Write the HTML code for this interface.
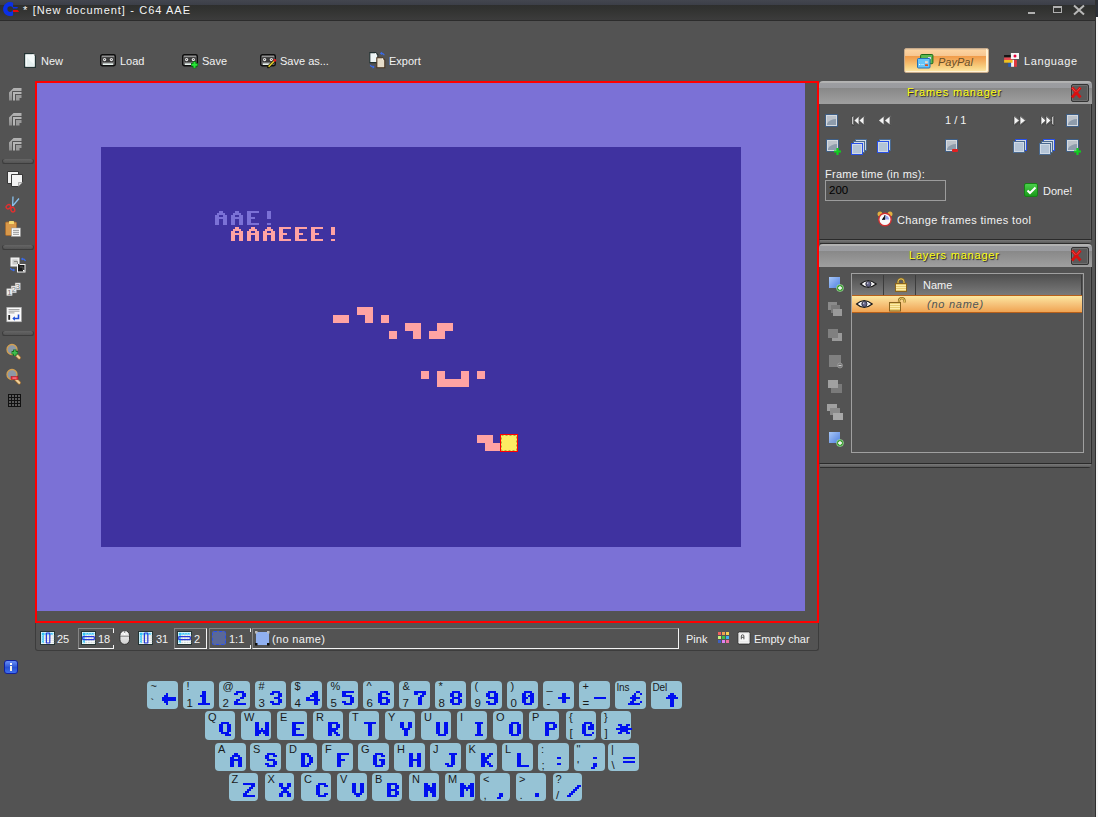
<!DOCTYPE html>
<html><head><meta charset="utf-8"><style>
*{margin:0;padding:0;box-sizing:border-box}
html,body{width:1098px;height:817px;overflow:hidden;background:#535353;font-family:"Liberation Sans",sans-serif;font-size:11px;color:#f2f2f2}
.a{position:absolute}
.t{position:absolute;white-space:nowrap;line-height:13px}
svg{position:absolute;overflow:visible}
.sep{position:absolute;left:2px;width:32px;height:4px;border-radius:2px;background:linear-gradient(#656565,#545454);box-shadow:inset 1px 0 0 #3a3a3a,inset -1px 0 0 #3a3a3a,0 1px 0 #3c3c3c}
.hdr{position:absolute;height:23px;border-radius:4px 4px 0 0;background:linear-gradient(#b4b4b4 0,#b0b0b0 2px,#9c9da1 2px,#9a9b9f 7px,#888 7px,#9e9e9e 22px,#9e9e9e 23px);}
.htxt{position:absolute;color:#ffff10;letter-spacing:0.8px;text-shadow:1px 1px 1px #1a1a1a;white-space:nowrap;line-height:13px}
.cls{position:absolute;width:18px;height:18px;border:1px solid #333;border-radius:2px;background:#5a5a5a;box-shadow:inset 0 0 0 1px #6e6e6e}
.key{position:absolute;background:#96c3d5;border-radius:4px;}
.kl{position:absolute;color:#1a1a1a;font-size:11px;line-height:11px;white-space:nowrap}
</style></head><body>

<div class="a" style="left:0;top:0;width:1095px;height:21px;background:linear-gradient(#43464f 0,#3c3f48 5px,#2e2f2e 5px,#323331 10px,#3c3c3c 20px,#2c2c2c 20px,#2c2c2c 21px)"></div>
<div class="a" style="left:1092px;top:21px;width:3px;height:796px;background:#565656"></div>
<div class="a" style="left:1095px;top:0;width:1px;height:817px;background:#303030"></div>
<div class="a" style="left:1096px;top:17px;width:2px;height:800px;background:#f6f6f6"></div>
<div class="a" style="left:1096px;top:0;width:2px;height:17px;background:#2c3038"></div>
<svg style="left:0;top:0" width="24" height="20"><path fill-rule="evenodd" d="M13.1 2.8 A7 7 0 1 0 13.1 15.4 Z M10.2 6.3 A2.8 2.8 0 1 0 10.2 11.9 A2.8 2.8 0 1 0 10.2 6.3 Z" fill="#0a30e8"/><path d="M13 7h5l-0.8 1.6h-4.2z" fill="#0a30e8"/><path d="M13 10h4.8l1.3 2h-6.1z" fill="#e80808"/></svg>
<div class="t" style="left:23px;top:4px;color:#f4f4f4;letter-spacing:0.95px;word-spacing:0.4px">* [New document] - C64 AAE</div>
<div class="a" style="left:1028px;top:12px;width:7px;height:2px;background:#b0b0b0"></div>
<div class="a" style="left:1053px;top:6px;width:9px;height:7px;border:1px solid #b0b0b0;border-top-width:2px"></div>
<svg style="left:1073px;top:5px" width="12" height="10"><path d="M1 0.5 L11 9.5 M11 0.5 L1 9.5" stroke="#b8b8b8" stroke-width="2"/></svg>
<svg style="left:24px;top:53px" width="13" height="16"><path d="M0.6 0.6h8.4l2.4 2.4v11.4h-10.8z" fill="#dfe9e9" stroke="#243434" stroke-width="1.2"/><path d="M1.6 1.6h7l1.8 1.8v10h-8.8z" fill="#f4fafa"/><path d="M3 4q3 5 7 7v2h-7z" fill="#e0ecec" opacity="0.8"/><rect x="8.5" y="1.2" width="2" height="2" fill="#fff"/></svg>
<div class="t" style="left:41px;top:55px">New</div>
<svg style="left:100px;top:54px" width="18" height="15"><rect x="0.7" y="0.7" width="14.6" height="11" rx="1.6" fill="#6e6e6e" stroke="#0e0e0e" stroke-width="1.4"/><rect x="2" y="1.8" width="12" height="1" fill="#9a9a9a"/><rect x="2.2" y="3.3" width="11.6" height="4.6" rx="0.8" fill="#3a3a3a"/><circle cx="4.6" cy="5.6" r="1.6" fill="#e8e8e8"/><circle cx="4.6" cy="5.6" r="0.5" fill="#222"/><circle cx="11.4" cy="5.6" r="1.6" fill="#e8e8e8"/><circle cx="11.4" cy="5.6" r="0.5" fill="#222"/><rect x="3" y="9.4" width="10" height="1.6" fill="#e8f4f0"/></svg>
<div class="t" style="left:120px;top:55px">Load</div>
<svg style="left:182px;top:54px" width="18" height="15"><rect x="0.7" y="0.7" width="14.6" height="11" rx="1.6" fill="#6e6e6e" stroke="#0e0e0e" stroke-width="1.4"/><rect x="2" y="1.8" width="12" height="1" fill="#9a9a9a"/><rect x="2.2" y="3.3" width="11.6" height="4.6" rx="0.8" fill="#3a3a3a"/><circle cx="4.6" cy="5.6" r="1.6" fill="#e8e8e8"/><circle cx="4.6" cy="5.6" r="0.5" fill="#222"/><circle cx="11.4" cy="5.6" r="1.6" fill="#e8e8e8"/><circle cx="11.4" cy="5.6" r="0.5" fill="#222"/><rect x="3" y="9.4" width="10" height="1.6" fill="#e8f4f0"/><path d="M12.5 7.3v7M9 10.8h7" stroke="#0a6a10" stroke-width="3.6"/><path d="M12.5 7.9v5.8M9.6 10.8h5.8" stroke="#28e838" stroke-width="2"/></svg>
<div class="t" style="left:202px;top:55px">Save</div>
<svg style="left:260px;top:54px" width="18" height="15"><rect x="0.7" y="0.7" width="14.6" height="11" rx="1.6" fill="#6e6e6e" stroke="#0e0e0e" stroke-width="1.4"/><rect x="2" y="1.8" width="12" height="1" fill="#9a9a9a"/><rect x="2.2" y="3.3" width="11.6" height="4.6" rx="0.8" fill="#3a3a3a"/><circle cx="4.6" cy="5.6" r="1.6" fill="#e8e8e8"/><circle cx="4.6" cy="5.6" r="0.5" fill="#222"/><circle cx="11.4" cy="5.6" r="1.6" fill="#e8e8e8"/><circle cx="11.4" cy="5.6" r="0.5" fill="#222"/><rect x="3" y="9.4" width="10" height="1.6" fill="#e8f4f0"/><path d="M8 13.3L14.2 7" stroke="#1a1a00" stroke-width="3"/><path d="M8.3 13L14 7.3" stroke="#e8d030" stroke-width="1.6"/><circle cx="14.8" cy="6.4" r="1.4" fill="#e82020"/><rect x="7.2" y="12.6" width="1.6" height="1.6" fill="#111"/></svg>
<div class="t" style="left:280px;top:55px">Save as...</div>
<svg style="left:368px;top:51px" width="19" height="19"><path d="M1.8 1.6h5.8l2.2 2.2v7.8h-8z" fill="#eef4f4" stroke="#223030" stroke-width="1.1"/><path d="M8.8 6.8h5.8l2.2 2.2v7.8h-8z" fill="#e6dcc8" stroke="#4a3420" stroke-width="1.1"/><rect x="7" y="2.2" width="1.2" height="1.2" fill="#fff"/><rect x="14" y="7.4" width="1.2" height="1.2" fill="#fff"/><path d="M16.3 4.2Q15.5 2 12.5 2.3" stroke="#3a6ae8" stroke-width="1.2" fill="none"/><path d="M12 2.4l2.2-1.8v3.6z" fill="#3a6ae8"/><path d="M2.3 14Q3 16.2 6 16" stroke="#3a6ae8" stroke-width="1.2" fill="none"/><path d="M6.8 16l-2.2 1.8v-3.6z" fill="#3a6ae8"/></svg>
<div class="t" style="left:389px;top:55px">Export</div>
<div class="a" style="left:904px;top:48px;width:85px;height:25px;border:1px solid #c8aa8a;border-radius:2px;box-shadow:inset -2px -1px 0 #fff2d4;background:linear-gradient(#e8c8a0 0,#e8c8a0 1px,#fdd4a0 1px,#f7c690 7px,#f09a48 7px,#f4b060 12px,#f8d080 18px,#fde8a8 23px)"></div>
<svg style="left:912px;top:48px" width="26" height="24"><rect x="8.6" y="6.5" width="12.3" height="9.2" rx="1" fill="#5cb850" stroke="#1e6a1a" stroke-width="1"/><rect x="16" y="9" width="3" height="2.2" fill="#d8d0f0"/><rect x="5.5" y="10.5" width="12.5" height="9.5" rx="1" fill="#66c4f8" stroke="#2270b8" stroke-width="1"/><rect x="7" y="16" width="1.2" height="1" fill="#fff"/><rect x="9" y="16.2" width="3" height="0.6" fill="#cfefff"/><rect x="13" y="13.2" width="2.8" height="2" fill="#f0d8c8"/><rect x="13" y="16.3" width="3" height="1.8" rx="0.6" fill="#e84810"/></svg>
<div class="t" style="left:938px;top:56px;color:#6a5028;font-style:italic">PayPal</div>
<svg style="left:1000px;top:48px" width="24" height="22"><rect x="8.2" y="11.8" width="2.9" height="7" fill="#2a5ab0"/><rect x="11.1" y="11.8" width="2.9" height="7" fill="#f4f4f4"/><rect x="14" y="11.8" width="2.9" height="7" fill="#e03a40"/><rect x="4.1" y="7" width="8.5" height="2.5" fill="#151515"/><rect x="4.1" y="9.5" width="8.5" height="2.5" fill="#e84a50"/><rect x="4.1" y="12" width="8.5" height="2.7" fill="#f0c020"/><rect x="10.9" y="5" width="8.1" height="6" fill="#f6f6f6"/><circle cx="15" cy="8" r="1.5" fill="#e8003a"/></svg>
<div class="t" style="left:1024px;top:55px;letter-spacing:0.6px">Language</div>
<svg style="left:0px;top:85px" width="24" height="16" viewBox="0 85 24 16"><defs><linearGradient id="cg88" x1="0" y1="88" x2="0" y2="100.5" gradientUnits="userSpaceOnUse"><stop offset="0" stop-color="#b4b4b4"/><stop offset="1" stop-color="#8c8c8c"/></linearGradient></defs><path d="M9 100.5V92.6L13.6 88H21.5V91H12.6L12 91.6V100.5Z" fill="url(#cg88)"/><path d="M13 100.5V92H21.5V94H15V100.5Z" fill="#b6b6b6"/><path d="M16 100.5V95H21.5V98H19.5V100.5Z" fill="#9a9a9a"/></svg>
<svg style="left:0px;top:110px" width="24" height="16" viewBox="0 85 24 16"><defs><linearGradient id="cg113" x1="0" y1="88" x2="0" y2="100.5" gradientUnits="userSpaceOnUse"><stop offset="0" stop-color="#b4b4b4"/><stop offset="1" stop-color="#8c8c8c"/></linearGradient></defs><path d="M9 100.5V92.6L13.6 88H21.5V91H12.6L12 91.6V100.5Z" fill="url(#cg113)"/><path d="M13 100.5V92H21.5V94H15V100.5Z" fill="#b6b6b6"/><path d="M16 100.5V95H21.5V98H19.5V100.5Z" fill="#9a9a9a"/></svg>
<svg style="left:0px;top:135px" width="24" height="16" viewBox="0 85 24 16"><defs><linearGradient id="cg138" x1="0" y1="88" x2="0" y2="100.5" gradientUnits="userSpaceOnUse"><stop offset="0" stop-color="#b4b4b4"/><stop offset="1" stop-color="#8c8c8c"/></linearGradient></defs><path d="M9 100.5V92.6L13.6 88H21.5V91H12.6L12 91.6V100.5Z" fill="url(#cg138)"/><path d="M13 100.5V92H21.5V94H15V100.5Z" fill="#b6b6b6"/><path d="M16 100.5V95H21.5V98H19.5V100.5Z" fill="#9a9a9a"/></svg>
<div class="sep" style="top:159px"></div>
<svg style="left:0;top:160px" width="30" height="85" viewBox="0 160 30 85"><path d="M7.5 171.5h11v12h-11z" fill="#f0f0f0" stroke="#2a2a2a" stroke-width="0.9"/><path d="M11.5 174.5h11v8l-4 4h-7z" fill="#f4f4f4" stroke="#2a2a2a" stroke-width="0.9"/><path d="M22.5 182.5h-4v4" fill="#ddd" stroke="#888" stroke-width="0.6"/><path d="M13 196.5L12.6 206M19 198.5L12.6 206" stroke="#88c0ec" stroke-width="1.3"/><ellipse cx="8.4" cy="206.8" rx="2.4" ry="1.9" transform="rotate(-35 8.4 206.8)" fill="none" stroke="#e03030" stroke-width="1.4"/><ellipse cx="12.8" cy="209.6" rx="1.9" ry="2.4" transform="rotate(-20 12.8 209.6)" fill="none" stroke="#e03030" stroke-width="1.4"/><rect x="5.5" y="222" width="11" height="13.5" rx="1.2" fill="#d8984a" stroke="#a8682a" stroke-width="0.8"/><rect x="9" y="221" width="5" height="3" rx="0.6" fill="#f4d870"/><rect x="11.5" y="228" width="9" height="8.5" fill="#fafafa" stroke="#999" stroke-width="0.6"/><path d="M13 230.3h6M13 232.3h6M13 234.3h6" stroke="#888" stroke-width="0.9"/></svg>
<div class="sep" style="top:245px"></div>
<svg style="left:0;top:250px" width="30" height="80" viewBox="0 250 30 80"><rect x="11" y="258" width="8" height="8" fill="#e8e8e8" stroke="#f4f4f4" stroke-width="1"/><rect x="12.5" y="259.5" width="5" height="5" fill="#c8c8c8"/><path d="M14 261.5h3.5v3.5" stroke="#888" stroke-width="1" fill="none"/><rect x="17.5" y="264.5" width="7.5" height="7.5" fill="#1a1a1a" stroke="#f4f4f4" stroke-width="1"/><path d="M20 267h3v3" stroke="#555" stroke-width="1" fill="none"/><rect x="23" y="270" width="1.5" height="1.5" fill="#fff"/><rect x="18" y="264" width="1.5" height="1.5" fill="#333"/><path d="M25.5 261Q24.5 258.5 21.5 259" stroke="#3a6ae8" stroke-width="1.2" fill="none"/><path d="M21 259l2-1.6v3.2z" fill="#3a6ae8"/><path d="M10.5 268Q11 270.5 14.5 270" stroke="#3a6ae8" stroke-width="1.2" fill="none"/><path d="M15 270l-2 1.6v-3.2z" fill="#3a6ae8"/><rect x="15.2" y="283" width="5" height="6.8" fill="#f0f0f0" stroke="#bbb" stroke-width="0.5"/><text x="15.6" y="289.3" font-size="8" fill="#777" font-family="Liberation Sans">3</text><rect x="11.2" y="286" width="5" height="6.8" fill="#f0f0f0" stroke="#bbb" stroke-width="0.5"/><text x="11.6" y="292.3" font-size="8" fill="#777" font-family="Liberation Sans">2</text><rect x="6.8" y="288.8" width="5.3" height="6.8" fill="#f0f0f0" stroke="#bbb" stroke-width="0.5"/><text x="7.3" y="295.1" font-size="8" fill="#777" font-family="Liberation Sans">1</text><rect x="6.8" y="307.3" width="14.6" height="14.5" fill="#fafafa" stroke="#aaa" stroke-width="0.6"/><path d="M8.5 309.5h11M8.5 311.2h11M8.5 312.9h6" stroke="#999" stroke-width="0.9"/><rect x="8.3" y="315" width="1.8" height="4.8" fill="#222"/><path d="M18.5 314.5v4h-5" stroke="#2050d8" stroke-width="1.6" fill="none"/><path d="M12.3 318.5l2.6-2.2v4.4z" fill="#2050d8"/></svg>
<div class="sep" style="top:331px"></div>
<svg style="left:0;top:340px" width="26" height="22" viewBox="0 340 26 22"><path d="M15.8 354.2L19.2 357.8" stroke="#9a6a30" stroke-width="3.6" stroke-linecap="round"/><path d="M15.8 354.2L19.2 357.8" stroke="#f0d098" stroke-width="2.2" stroke-linecap="round"/><circle cx="12" cy="349.5" r="5" fill="#8c98a6" stroke="#d4a050" stroke-width="1.3"/><path d="M14.8 349.6v6.4M11.6 352.8h6.4" stroke="#1a6a20" stroke-width="3.4"/><path d="M14.8 350.2v5.2M12.2 352.8h5.2" stroke="#40c050" stroke-width="1.8"/></svg>
<svg style="left:0;top:365px" width="26" height="22" viewBox="0 340 26 22"><path d="M15.8 354.2L19.2 357.8" stroke="#9a6a30" stroke-width="3.6" stroke-linecap="round"/><path d="M15.8 354.2L19.2 357.8" stroke="#f0d098" stroke-width="2.2" stroke-linecap="round"/><circle cx="12" cy="349.5" r="5" fill="#8c98a6" stroke="#d4a050" stroke-width="1.3"/><rect x="11" y="351.5" width="7" height="3" fill="#e82838" stroke="#a01820" stroke-width="0.5"/><rect x="12.5" y="352.6" width="4" height="0.9" fill="#ffb0b0"/></svg>
<svg style="left:8px;top:394px" width="13" height="13"><rect x="0" y="0" width="13" height="13" fill="#111"/><rect x="1" y="1" width="2" height="2" fill="#5a5a5a"/><rect x="1" y="4" width="2" height="2" fill="#5a5a5a"/><rect x="1" y="7" width="2" height="2" fill="#5a5a5a"/><rect x="1" y="10" width="2" height="2" fill="#5a5a5a"/><rect x="4" y="1" width="2" height="2" fill="#5a5a5a"/><rect x="4" y="4" width="2" height="2" fill="#5a5a5a"/><rect x="4" y="7" width="2" height="2" fill="#5a5a5a"/><rect x="4" y="10" width="2" height="2" fill="#5a5a5a"/><rect x="7" y="1" width="2" height="2" fill="#5a5a5a"/><rect x="7" y="4" width="2" height="2" fill="#5a5a5a"/><rect x="7" y="7" width="2" height="2" fill="#5a5a5a"/><rect x="7" y="10" width="2" height="2" fill="#5a5a5a"/><rect x="10" y="1" width="2" height="2" fill="#5a5a5a"/><rect x="10" y="4" width="2" height="2" fill="#5a5a5a"/><rect x="10" y="7" width="2" height="2" fill="#5a5a5a"/><rect x="10" y="10" width="2" height="2" fill="#5a5a5a"/></svg>
<div class="a" style="left:35px;top:81px;width:784px;height:542px;border:2px solid #ff0000;background:#535353"></div>
<div class="a" style="left:37px;top:83px;width:768px;height:528px;background:#7b71d6"></div>
<div class="a" style="left:101px;top:147px;width:640px;height:400px;background:#3f32a0"></div>
<svg style="left:0;top:0" width="1098" height="817"><path d="M219 211h4v2h-4zM217 213h8v2h-8zM215 215h4v2h-4zM223 215h4v2h-4zM215 217h12v2h-12zM215 219h4v2h-4zM223 219h4v2h-4zM215 221h4v2h-4zM223 221h4v2h-4zM215 223h4v2h-4zM223 223h4v2h-4zM235 211h4v2h-4zM233 213h8v2h-8zM231 215h4v2h-4zM239 215h4v2h-4zM231 217h12v2h-12zM231 219h4v2h-4zM239 219h4v2h-4zM231 221h4v2h-4zM239 221h4v2h-4zM231 223h4v2h-4zM239 223h4v2h-4zM247 211h12v2h-12zM247 213h4v2h-4zM247 215h4v2h-4zM247 217h8v2h-8zM247 219h4v2h-4zM247 221h4v2h-4zM247 223h12v2h-12zM267 211h4v2h-4zM267 213h4v2h-4zM267 215h4v2h-4zM267 217h4v2h-4zM267 223h4v2h-4z" fill="#7b71d6"/><path d="M235 227h4v2h-4zM233 229h8v2h-8zM231 231h4v2h-4zM239 231h4v2h-4zM231 233h12v2h-12zM231 235h4v2h-4zM239 235h4v2h-4zM231 237h4v2h-4zM239 237h4v2h-4zM231 239h4v2h-4zM239 239h4v2h-4zM251 227h4v2h-4zM249 229h8v2h-8zM247 231h4v2h-4zM255 231h4v2h-4zM247 233h12v2h-12zM247 235h4v2h-4zM255 235h4v2h-4zM247 237h4v2h-4zM255 237h4v2h-4zM247 239h4v2h-4zM255 239h4v2h-4zM267 227h4v2h-4zM265 229h8v2h-8zM263 231h4v2h-4zM271 231h4v2h-4zM263 233h12v2h-12zM263 235h4v2h-4zM271 235h4v2h-4zM263 237h4v2h-4zM271 237h4v2h-4zM263 239h4v2h-4zM271 239h4v2h-4zM279 227h12v2h-12zM279 229h4v2h-4zM279 231h4v2h-4zM279 233h8v2h-8zM279 235h4v2h-4zM279 237h4v2h-4zM279 239h12v2h-12zM295 227h12v2h-12zM295 229h4v2h-4zM295 231h4v2h-4zM295 233h8v2h-8zM295 235h4v2h-4zM295 237h4v2h-4zM295 239h12v2h-12zM311 227h12v2h-12zM311 229h4v2h-4zM311 231h4v2h-4zM311 233h8v2h-8zM311 235h4v2h-4zM311 237h4v2h-4zM311 239h12v2h-12zM331 227h4v2h-4zM331 229h4v2h-4zM331 231h4v2h-4zM331 233h4v2h-4zM331 239h4v2h-4z" fill="#ffa3a3"/>
<rect x="333" y="315" width="16" height="8" fill="#ffa3a3"/><rect x="357" y="307" width="16" height="8" fill="#ffa3a3"/><rect x="365" y="315" width="8" height="8" fill="#ffa3a3"/><rect x="381" y="315" width="8" height="8" fill="#ffa3a3"/><rect x="389" y="331" width="8" height="8" fill="#ffa3a3"/><rect x="405" y="323" width="16" height="8" fill="#ffa3a3"/><rect x="413" y="331" width="8" height="8" fill="#ffa3a3"/><rect x="437" y="323" width="16" height="8" fill="#ffa3a3"/><rect x="429" y="331" width="16" height="8" fill="#ffa3a3"/><rect x="421" y="371" width="8" height="8" fill="#ffa3a3"/><rect x="437" y="371" width="8" height="8" fill="#ffa3a3"/><rect x="461" y="371" width="8" height="8" fill="#ffa3a3"/><rect x="437" y="379" width="32" height="8" fill="#ffa3a3"/><rect x="477" y="371" width="8" height="8" fill="#ffa3a3"/><rect x="477" y="435" width="16" height="8" fill="#ffa3a3"/><rect x="485" y="443" width="16" height="8" fill="#ffa3a3"/>
<rect x="500" y="434" width="18" height="18" fill="#ff0000"/><rect x="501" y="435" width="16" height="16" fill="#fdec62"/><rect x="501.5" y="435.5" width="15" height="15" fill="none" stroke="#a8b040" stroke-width="1" stroke-dasharray="2 2"/></svg>
<div class="a" style="left:819px;top:104px;width:273px;height:136px;background:#535353;border-left:1px solid #484848;border-right:1px solid #2e2e2e;border-bottom:1px solid #2a2a2a;box-shadow:inset -1px 0 0 #5e5e5e"></div>
<div class="a" style="left:820px;top:240px;width:271px;height:4px;border-radius:0 0 3px 0;background:linear-gradient(#7a7a7a 0,#5a5a5a 3px,#2e2e2e 3px,#2e2e2e 4px)"></div>
<div class="hdr" style="left:819px;top:81px;width:273px"></div>
<div class="htxt" style="left:907px;top:86px">Frames manager</div>
<div class="cls" style="left:1071px;top:84px"></div><svg style="left:1071px;top:86px" width="14" height="14"><path d="M1 1.5L9.5 11.5M9.5 1.5L1 11.5" stroke="#d81010" stroke-width="2.8"/><path d="M1 1.8L4.5 5.8M9.2 1.8L5.8 5.6" stroke="#f06060" stroke-width="1" opacity="0.7"/></svg>
<svg style="left:825px;top:114px" width="16" height="16"><rect x="0" y="0" width="13" height="13" rx="1" fill="#3f5f86"/><rect x="1" y="1" width="11" height="11" fill="#d5dae0"/><rect x="2" y="2" width="9" height="9" fill="#bcc2ca"/><path d="M2 11V9.5Q5 5 11 5V11Z" fill="#8e9cac"/></svg>
<svg style="left:1066px;top:114px" width="16" height="16"><rect x="0" y="0" width="13" height="13" rx="1" fill="#3f5f86"/><rect x="1" y="1" width="11" height="11" fill="#d5dae0"/><rect x="2" y="2" width="9" height="9" fill="#bcc2ca"/><path d="M2 11V9.5Q5 5 11 5V11Z" fill="#8e9cac"/></svg>
<svg style="left:851px;top:115px" width="16" height="13"><rect x="1.6" y="1.6" width="1.6" height="9" fill="#2a2a2a" opacity="0.8"/><rect x="1" y="1" width="1.6" height="9" fill="#f4f4f4" stroke="#3a3a3a" stroke-width="0.5"/><polygon points="8.8,1.8 3.8,6.3 8.8,10.8" fill="#2a2a2a" opacity="0.8"/><polygon points="8,1 3,5.5 8,10" fill="#f4f4f4" stroke="#3a3a3a" stroke-width="0.7"/><polygon points="8,1 3,5.5 8,10" fill="none" stroke="#bbb" stroke-width="0.4" transform="translate(0.6 0)" opacity="0.6"/><polygon points="13.8,1.8 8.8,6.3 13.8,10.8" fill="#2a2a2a" opacity="0.8"/><polygon points="13,1 8,5.5 13,10" fill="#f4f4f4" stroke="#3a3a3a" stroke-width="0.7"/><polygon points="13,1 8,5.5 13,10" fill="none" stroke="#bbb" stroke-width="0.4" transform="translate(0.6 0)" opacity="0.6"/></svg>
<svg style="left:877px;top:115px" width="16" height="13"><polygon points="7.8,1.8 2.3,6.3 7.8,10.8" fill="#2a2a2a" opacity="0.8"/><polygon points="7,1 1.5,5.5 7,10" fill="#f4f4f4" stroke="#3a3a3a" stroke-width="0.7"/><polygon points="7,1 1.5,5.5 7,10" fill="none" stroke="#bbb" stroke-width="0.4" transform="translate(0.6 0)" opacity="0.6"/><polygon points="13.8,1.8 8.3,6.3 13.8,10.8" fill="#2a2a2a" opacity="0.8"/><polygon points="13,1 7.5,5.5 13,10" fill="#f4f4f4" stroke="#3a3a3a" stroke-width="0.7"/><polygon points="13,1 7.5,5.5 13,10" fill="none" stroke="#bbb" stroke-width="0.4" transform="translate(0.6 0)" opacity="0.6"/></svg>
<svg style="left:1013px;top:115px" width="16" height="13"><polygon points="1.8,1.8 7.3,6.3 1.8,10.8" fill="#2a2a2a" opacity="0.8"/><polygon points="1,1 6.5,5.5 1,10" fill="#f4f4f4" stroke="#3a3a3a" stroke-width="0.7"/><polygon points="1,1 6.5,5.5 1,10" fill="none" stroke="#bbb" stroke-width="0.4" transform="translate(0.6 0)" opacity="0.6"/><polygon points="7.8,1.8 13.3,6.3 7.8,10.8" fill="#2a2a2a" opacity="0.8"/><polygon points="7,1 12.5,5.5 7,10" fill="#f4f4f4" stroke="#3a3a3a" stroke-width="0.7"/><polygon points="7,1 12.5,5.5 7,10" fill="none" stroke="#bbb" stroke-width="0.4" transform="translate(0.6 0)" opacity="0.6"/></svg>
<svg style="left:1040px;top:115px" width="16" height="13"><polygon points="1.8,1.8 6.8,6.3 1.8,10.8" fill="#2a2a2a" opacity="0.8"/><polygon points="1,1 6,5.5 1,10" fill="#f4f4f4" stroke="#3a3a3a" stroke-width="0.7"/><polygon points="1,1 6,5.5 1,10" fill="none" stroke="#bbb" stroke-width="0.4" transform="translate(0.6 0)" opacity="0.6"/><polygon points="6.8,1.8 11.8,6.3 6.8,10.8" fill="#2a2a2a" opacity="0.8"/><polygon points="6,1 11,5.5 6,10" fill="#f4f4f4" stroke="#3a3a3a" stroke-width="0.7"/><polygon points="6,1 11,5.5 6,10" fill="none" stroke="#bbb" stroke-width="0.4" transform="translate(0.6 0)" opacity="0.6"/><rect x="12.6" y="1.6" width="1.6" height="9" fill="#2a2a2a" opacity="0.8"/><rect x="12" y="1" width="1.6" height="9" fill="#f4f4f4" stroke="#3a3a3a" stroke-width="0.5"/></svg>
<div class="t" style="left:945px;top:114px">1 / 1</div>
<svg style="left:826px;top:139px" width="16" height="16"><rect x="0" y="0" width="13" height="13" rx="1" fill="#3f5f86"/><rect x="1" y="1" width="11" height="11" fill="#d5dae0"/><rect x="2" y="2" width="9" height="9" fill="#bcc2ca"/><path d="M2 11V9.5Q5 5 11 5V11Z" fill="#8e9cac"/><path d="M11.5 9v7M8 12.5h7" stroke="#10d020" stroke-width="2.2"/></svg>
<svg style="left:1066px;top:139px" width="16" height="16"><rect x="0" y="0" width="13" height="13" rx="1" fill="#3f5f86"/><rect x="1" y="1" width="11" height="11" fill="#d5dae0"/><rect x="2" y="2" width="9" height="9" fill="#bcc2ca"/><path d="M2 11V9.5Q5 5 11 5V11Z" fill="#8e9cac"/><path d="M11.5 9v7M8 12.5h7" stroke="#10d020" stroke-width="2.2"/></svg>
<svg style="left:945px;top:139px" width="16" height="16"><rect x="0" y="0" width="13" height="13" rx="1" fill="#3f5f86"/><rect x="1" y="1" width="11" height="11" fill="#d5dae0"/><rect x="2" y="2" width="9" height="9" fill="#bcc2ca"/><path d="M2 11V9.5Q5 5 11 5V11Z" fill="#8e9cac"/><rect x="7" y="10" width="6" height="3" rx="1" fill="#e02020"/></svg>
<svg style="left:851px;top:139px" width="16" height="16"><rect x="4.5" y="0.5" width="11" height="11" fill="#b4c4d6" stroke="#4a6a90" stroke-width="1"/><rect x="5.5" y="1.5" width="9" height="9" fill="none" stroke="#dde4ec" stroke-width="1" opacity="0.7"/><rect x="2.5" y="2.5" width="11" height="11" fill="#b4c4d6" stroke="#4a6a90" stroke-width="1"/><rect x="3.5" y="3.5" width="9" height="9" fill="none" stroke="#dde4ec" stroke-width="1" opacity="0.7"/><rect x="0.5" y="4.5" width="11" height="11" fill="#b4c4d6" stroke="#2850e8" stroke-width="1"/><rect x="1.5" y="5.5" width="9" height="9" fill="none" stroke="#dde4ec" stroke-width="1" opacity="0.7"/></svg>
<svg style="left:877px;top:139px" width="16" height="16"><rect x="2.5" y="0.5" width="11" height="11" fill="#b4c4d6" stroke="#4a6a90" stroke-width="1"/><rect x="3.5" y="1.5" width="9" height="9" fill="none" stroke="#dde4ec" stroke-width="1" opacity="0.7"/><rect x="0.5" y="2.5" width="11" height="11" fill="#b4c4d6" stroke="#2850e8" stroke-width="1"/><rect x="1.5" y="3.5" width="9" height="9" fill="none" stroke="#dde4ec" stroke-width="1" opacity="0.7"/></svg>
<svg style="left:1013px;top:139px" width="16" height="16"><rect x="2.5" y="0.5" width="11" height="11" fill="#b4c4d6" stroke="#2850e8" stroke-width="1"/><rect x="3.5" y="1.5" width="9" height="9" fill="none" stroke="#dde4ec" stroke-width="1" opacity="0.7"/><rect x="0.5" y="2.5" width="11" height="11" fill="#b4c4d6" stroke="#4a6a90" stroke-width="1"/><rect x="1.5" y="3.5" width="9" height="9" fill="none" stroke="#dde4ec" stroke-width="1" opacity="0.7"/></svg>
<svg style="left:1039px;top:139px" width="16" height="16"><rect x="4.5" y="0.5" width="11" height="11" fill="#b4c4d6" stroke="#2850e8" stroke-width="1"/><rect x="5.5" y="1.5" width="9" height="9" fill="none" stroke="#dde4ec" stroke-width="1" opacity="0.7"/><rect x="2.5" y="2.5" width="11" height="11" fill="#b4c4d6" stroke="#4a6a90" stroke-width="1"/><rect x="3.5" y="3.5" width="9" height="9" fill="none" stroke="#dde4ec" stroke-width="1" opacity="0.7"/><rect x="0.5" y="4.5" width="11" height="11" fill="#b4c4d6" stroke="#4a6a90" stroke-width="1"/><rect x="1.5" y="5.5" width="9" height="9" fill="none" stroke="#dde4ec" stroke-width="1" opacity="0.7"/></svg>
<div class="t" style="left:825px;top:168px;letter-spacing:0.25px">Frame time (in ms):</div>
<div class="a" style="left:825px;top:180px;width:121px;height:21px;border:1px solid #9c9c9c;background:#535353"></div>
<div class="t" style="left:829px;top:184px;color:#000;font-size:11.5px">200</div>
<div class="a" style="left:1024px;top:183px;width:14px;height:14px;border-radius:2px;background:linear-gradient(#4ad04a,#1a9a1a);border:1px solid #168016"></div>
<svg style="left:1025px;top:184px" width="13" height="13"><path d="M2.5 6.5L5 9L10.5 3.5" stroke="#fff" stroke-width="2" fill="none"/></svg>
<div class="t" style="left:1043px;top:185px">Done!</div>
<svg style="left:877px;top:211px" width="16" height="16"><circle cx="3" cy="3" r="2.5" fill="#e0b040"/><circle cx="13" cy="3" r="2.5" fill="#e0b040"/><circle cx="8" cy="8.5" r="6.2" fill="#fafafa" stroke="#d03030" stroke-width="1.4"/><path d="M8 4v4.5h-3" stroke="#334" stroke-width="1"/><path d="M8.5 4.5a4 4 0 0 1 3.5 4h-3.5z" fill="#90a0f0"/></svg>
<div class="t" style="left:897px;top:214px;letter-spacing:0.37px">Change frames times tool</div>
<div class="a" style="left:819px;top:267px;width:273px;height:197px;background:#535353;border-left:1px solid #484848;border-right:1px solid #2e2e2e;border-bottom:1px solid #2a2a2a;box-shadow:inset -1px 0 0 #5e5e5e"></div>
<div class="a" style="left:820px;top:464px;width:271px;height:4px;border-radius:0 0 3px 0;background:linear-gradient(#7a7a7a 0,#5a5a5a 3px,#2e2e2e 3px,#2e2e2e 4px)"></div>
<div class="hdr" style="left:819px;top:244px;width:273px"></div>
<div class="htxt" style="left:909px;top:249px">Layers manager</div>
<div class="cls" style="left:1071px;top:247px"></div><svg style="left:1071px;top:249px" width="14" height="14"><path d="M1 1.5L9.5 11.5M9.5 1.5L1 11.5" stroke="#d81010" stroke-width="2.8"/><path d="M1 1.8L4.5 5.8M9.2 1.8L5.8 5.6" stroke="#f06060" stroke-width="1" opacity="0.7"/></svg>
<svg style="left:829px;top:277px" width="15" height="15"><defs><linearGradient id="la277" x1="0" y1="0" x2="1" y2="1"><stop offset="0" stop-color="#a8c8f8"/><stop offset="1" stop-color="#5080e0"/></linearGradient></defs><rect x="0" y="0" width="11" height="11" fill="url(#la277)"/><circle cx="11" cy="11" r="3.5" fill="#3a9a30" stroke="#cfc" stroke-width="0.5"/><path d="M11 9v4M9 11h4" stroke="#fff" stroke-width="1.3"/></svg>
<svg style="left:828px;top:302px" width="14" height="15"><rect x="0" y="0" width="9" height="8" fill="#8a8a8a"/><rect x="3" y="3" width="9" height="8" fill="#7a7a7a"/><rect x="5" y="7" width="9" height="7" fill="#9a9a9a"/></svg>
<svg style="left:828px;top:329px" width="15" height="13"><rect x="0" y="0" width="10" height="9" fill="#7e7e7e"/><rect x="4" y="4" width="10" height="8" fill="#9a9a9a"/><rect x="0" y="0" width="10" height="9" fill="#808080"/></svg>
<svg style="left:829px;top:355px" width="15" height="14"><rect x="0" y="0" width="12" height="12" fill="#808080"/><circle cx="11" cy="10.5" r="2.5" fill="#777" stroke="#aaa" stroke-width="0.6"/><path d="M9.5 10.5h3" stroke="#ddd" stroke-width="0.8"/></svg>
<svg style="left:828px;top:380px" width="15" height="14"><rect x="3" y="4" width="11" height="9" fill="#7a7a7a"/><rect x="0" y="0" width="10" height="8" fill="#a0a0a0"/></svg>
<svg style="left:827px;top:404px" width="16" height="17"><rect x="0" y="0" width="10" height="7" fill="#a0a0a0"/><rect x="3" y="4" width="10" height="7" fill="#8a8a8a"/><rect x="6" y="9" width="10" height="7" fill="#a8a8a8"/></svg>
<svg style="left:829px;top:432px" width="15" height="15"><defs><linearGradient id="la432" x1="0" y1="0" x2="1" y2="1"><stop offset="0" stop-color="#a8c8f8"/><stop offset="1" stop-color="#5080e0"/></linearGradient></defs><rect x="0" y="0" width="11" height="11" fill="url(#la432)"/><circle cx="11" cy="11" r="3.5" fill="#3a9a30" stroke="#cfc" stroke-width="0.5"/><path d="M11 9v4M9 11h4" stroke="#fff" stroke-width="1.3"/></svg>
<div class="a" style="left:851px;top:273px;width:233px;height:180px;border:1px solid #a0a0a0;background:#535353"></div>
<div class="a" style="left:852px;top:274px;width:230px;height:21px;background:linear-gradient(#4e4e4e,#7a7a7a)"></div>
<div class="a" style="left:883px;top:275px;width:1px;height:20px;background:#3c3c3c"></div>
<div class="a" style="left:915px;top:275px;width:1px;height:20px;background:#3c3c3c"></div>
<div class="a" style="left:1081px;top:275px;width:1px;height:20px;background:#3c3c3c"></div>
<svg style="left:860px;top:279px" width="17" height="10"><path d="M0.6 5Q8 -1.8 16.2 5Q8 11.8 0.6 5Z" fill="#f6f6f6" stroke="#1a1a1a" stroke-width="1.2"/><circle cx="8.4" cy="5" r="2.6" fill="#66668a" stroke="#2a2a3a" stroke-width="0.9"/><circle cx="7.7" cy="4.1" r="0.7" fill="#fff"/></svg>
<svg style="left:895px;top:278px" width="12" height="14"><path d="M3 6V3.8a3 3 0 0 1 6 0V6" stroke="#8a6a20" stroke-width="2.2" fill="none"/><path d="M3 6V3.8a3 3 0 0 1 6 0V6" stroke="#e8c860" stroke-width="1" fill="none"/><rect x="0.5" y="5.5" width="11" height="8" fill="#e8cc70" stroke="#8a6420" stroke-width="1"/><path d="M1 7.5h10M1 9.5h10M1 11.5h10" stroke="#fff0b0" stroke-width="0.9"/></svg>
<div class="t" style="left:923px;top:279px">Name</div>
<div class="a" style="left:852px;top:295px;width:230px;height:18px;border-top:1px solid #b8601a;border-bottom:1px solid #b8601a;background:linear-gradient(#fde8a0,#f6c47c 50%,#f0a452)"></div>
<svg style="left:856px;top:299px" width="17" height="10"><path d="M0.6 5Q8 -1.8 16.2 5Q8 11.8 0.6 5Z" fill="#f6f6f6" stroke="#1a1a1a" stroke-width="1.2"/><circle cx="8.4" cy="5" r="2.6" fill="#66668a" stroke="#2a2a3a" stroke-width="0.9"/><circle cx="7.7" cy="4.1" r="0.7" fill="#fff"/></svg>
<svg style="left:889px;top:297px" width="17" height="15"><path d="M10 6V4a2.8 2.8 0 0 1 5.6 0v1.5" stroke="#8a6a20" stroke-width="2.2" fill="none"/><path d="M10 6V4a2.8 2.8 0 0 1 5.6 0v1.5" stroke="#e8c860" stroke-width="1" fill="none"/><rect x="0.5" y="5.5" width="11" height="8.5" fill="#e8cc70" stroke="#8a6420" stroke-width="1"/><path d="M1 7.5h10M1 9.5h10M1 11.5h10" stroke="#fff0b0" stroke-width="0.9"/></svg>
<div class="t" style="left:927px;top:298px;color:#4e5656;font-style:italic;letter-spacing:0.75px">(no name)</div>
<div class="a" style="left:35px;top:623px;width:784px;height:28px;border:1px solid #3c3c3c;border-top:none;border-radius:0 0 3px 3px;background:#535353"></div>
<svg style="left:39.5px;top:630.5px" width="16" height="15"><rect x="0.5" y="0.5" width="14" height="13" fill="#f8fcfc" stroke="#243434" stroke-width="1"/><rect x="1.8" y="1.8" width="11.4" height="1.8" fill="#30c0f4"/><rect x="1.8" y="1.8" width="2" height="10.4" fill="#30c0f4"/><rect x="4.2" y="4.2" width="1.9" height="1.4" fill="#d4dcdc"/><rect x="4.2" y="6.4" width="1.9" height="1.4" fill="#d4dcdc"/><rect x="4.2" y="8.600000000000001" width="1.9" height="1.4" fill="#d4dcdc"/><rect x="4.2" y="10.8" width="1.9" height="1.4" fill="#d4dcdc"/><rect x="6.9" y="4.2" width="1.9" height="1.4" fill="#d4dcdc"/><rect x="6.9" y="6.4" width="1.9" height="1.4" fill="#d4dcdc"/><rect x="6.9" y="8.600000000000001" width="1.9" height="1.4" fill="#d4dcdc"/><rect x="6.9" y="10.8" width="1.9" height="1.4" fill="#d4dcdc"/><rect x="9.600000000000001" y="4.2" width="1.9" height="1.4" fill="#d4dcdc"/><rect x="9.600000000000001" y="6.4" width="1.9" height="1.4" fill="#d4dcdc"/><rect x="9.600000000000001" y="8.600000000000001" width="1.9" height="1.4" fill="#d4dcdc"/><rect x="9.600000000000001" y="10.8" width="1.9" height="1.4" fill="#d4dcdc"/><rect x="12.3" y="4.2" width="1.9" height="1.4" fill="#d4dcdc"/><rect x="12.3" y="6.4" width="1.9" height="1.4" fill="#d4dcdc"/><rect x="12.3" y="8.600000000000001" width="1.9" height="1.4" fill="#d4dcdc"/><rect x="12.3" y="10.8" width="1.9" height="1.4" fill="#d4dcdc"/><rect x="1.6" y="4.2" width="1.5" height="1.2" fill="#9ae0f8"/><rect x="1.6" y="6.4" width="1.5" height="1.2" fill="#9ae0f8"/><rect x="1.6" y="8.600000000000001" width="1.5" height="1.2" fill="#9ae0f8"/><rect x="1.6" y="10.8" width="1.5" height="1.2" fill="#9ae0f8"/><rect x="4.2" y="1.9" width="1.5" height="1" fill="#9ae0f8"/><rect x="6.9" y="1.9" width="1.5" height="1" fill="#9ae0f8"/><rect x="9.600000000000001" y="1.9" width="1.5" height="1" fill="#9ae0f8"/><rect x="12.3" y="1.9" width="1.5" height="1" fill="#9ae0f8"/><rect x="6.4" y="2" width="3.4" height="10" rx="0.6" fill="none" stroke="#2838d8" stroke-width="1.2"/></svg>
<div class="t" style="left:57px;top:633px">25</div>
<div class="a" style="left:78px;top:628px;width:36px;height:21px;border-top:1px solid #858585;border-left:1px solid #858585;border-bottom:1px solid #f4f4f4;border-right:1px solid #f4f4f4"></div>
<div class="a" style="left:112px;top:633px;width:3px;height:12px;background:#535353"></div>
<svg style="left:80.5px;top:630.5px" width="16" height="15"><rect x="0.5" y="0.5" width="14" height="13" fill="#f8fcfc" stroke="#243434" stroke-width="1"/><rect x="1.8" y="1.8" width="11.4" height="1.8" fill="#30c0f4"/><rect x="1.8" y="1.8" width="2" height="10.4" fill="#30c0f4"/><rect x="4.2" y="4.2" width="1.9" height="1.4" fill="#d4dcdc"/><rect x="4.2" y="6.4" width="1.9" height="1.4" fill="#d4dcdc"/><rect x="4.2" y="8.600000000000001" width="1.9" height="1.4" fill="#d4dcdc"/><rect x="4.2" y="10.8" width="1.9" height="1.4" fill="#d4dcdc"/><rect x="6.9" y="4.2" width="1.9" height="1.4" fill="#d4dcdc"/><rect x="6.9" y="6.4" width="1.9" height="1.4" fill="#d4dcdc"/><rect x="6.9" y="8.600000000000001" width="1.9" height="1.4" fill="#d4dcdc"/><rect x="6.9" y="10.8" width="1.9" height="1.4" fill="#d4dcdc"/><rect x="9.600000000000001" y="4.2" width="1.9" height="1.4" fill="#d4dcdc"/><rect x="9.600000000000001" y="6.4" width="1.9" height="1.4" fill="#d4dcdc"/><rect x="9.600000000000001" y="8.600000000000001" width="1.9" height="1.4" fill="#d4dcdc"/><rect x="9.600000000000001" y="10.8" width="1.9" height="1.4" fill="#d4dcdc"/><rect x="12.3" y="4.2" width="1.9" height="1.4" fill="#d4dcdc"/><rect x="12.3" y="6.4" width="1.9" height="1.4" fill="#d4dcdc"/><rect x="12.3" y="8.600000000000001" width="1.9" height="1.4" fill="#d4dcdc"/><rect x="12.3" y="10.8" width="1.9" height="1.4" fill="#d4dcdc"/><rect x="1.6" y="4.2" width="1.5" height="1.2" fill="#9ae0f8"/><rect x="1.6" y="6.4" width="1.5" height="1.2" fill="#9ae0f8"/><rect x="1.6" y="8.600000000000001" width="1.5" height="1.2" fill="#9ae0f8"/><rect x="1.6" y="10.8" width="1.5" height="1.2" fill="#9ae0f8"/><rect x="4.2" y="1.9" width="1.5" height="1" fill="#9ae0f8"/><rect x="6.9" y="1.9" width="1.5" height="1" fill="#9ae0f8"/><rect x="9.600000000000001" y="1.9" width="1.5" height="1" fill="#9ae0f8"/><rect x="12.3" y="1.9" width="1.5" height="1" fill="#9ae0f8"/><rect x="1.7" y="5.6" width="11.6" height="3" rx="0.6" fill="none" stroke="#2838d8" stroke-width="1.2"/></svg>
<div class="t" style="left:98px;top:633px">18</div>
<svg style="left:119px;top:630px" width="12" height="16"><defs><linearGradient id="ms" x1="0" y1="0" x2="0" y2="1"><stop offset="0" stop-color="#f8f8f8"/><stop offset="1" stop-color="#d0d0d0"/></linearGradient></defs><rect x="0.9" y="0.6" width="9.6" height="13.8" rx="4.8" fill="url(#ms)" stroke="#2a2a2a" stroke-width="0.9"/><path d="M1 6.2h9.4" stroke="#555" stroke-width="0.7"/><path d="M5.7 0.8v3.4" stroke="#666" stroke-width="0.8"/><rect x="5" y="3" width="1.4" height="2" fill="#fff"/></svg>
<svg style="left:137.5px;top:630.5px" width="16" height="15"><rect x="0.5" y="0.5" width="14" height="13" fill="#f8fcfc" stroke="#243434" stroke-width="1"/><rect x="1.8" y="1.8" width="11.4" height="1.8" fill="#30c0f4"/><rect x="1.8" y="1.8" width="2" height="10.4" fill="#30c0f4"/><rect x="4.2" y="4.2" width="1.9" height="1.4" fill="#d4dcdc"/><rect x="4.2" y="6.4" width="1.9" height="1.4" fill="#d4dcdc"/><rect x="4.2" y="8.600000000000001" width="1.9" height="1.4" fill="#d4dcdc"/><rect x="4.2" y="10.8" width="1.9" height="1.4" fill="#d4dcdc"/><rect x="6.9" y="4.2" width="1.9" height="1.4" fill="#d4dcdc"/><rect x="6.9" y="6.4" width="1.9" height="1.4" fill="#d4dcdc"/><rect x="6.9" y="8.600000000000001" width="1.9" height="1.4" fill="#d4dcdc"/><rect x="6.9" y="10.8" width="1.9" height="1.4" fill="#d4dcdc"/><rect x="9.600000000000001" y="4.2" width="1.9" height="1.4" fill="#d4dcdc"/><rect x="9.600000000000001" y="6.4" width="1.9" height="1.4" fill="#d4dcdc"/><rect x="9.600000000000001" y="8.600000000000001" width="1.9" height="1.4" fill="#d4dcdc"/><rect x="9.600000000000001" y="10.8" width="1.9" height="1.4" fill="#d4dcdc"/><rect x="12.3" y="4.2" width="1.9" height="1.4" fill="#d4dcdc"/><rect x="12.3" y="6.4" width="1.9" height="1.4" fill="#d4dcdc"/><rect x="12.3" y="8.600000000000001" width="1.9" height="1.4" fill="#d4dcdc"/><rect x="12.3" y="10.8" width="1.9" height="1.4" fill="#d4dcdc"/><rect x="1.6" y="4.2" width="1.5" height="1.2" fill="#9ae0f8"/><rect x="1.6" y="6.4" width="1.5" height="1.2" fill="#9ae0f8"/><rect x="1.6" y="8.600000000000001" width="1.5" height="1.2" fill="#9ae0f8"/><rect x="1.6" y="10.8" width="1.5" height="1.2" fill="#9ae0f8"/><rect x="4.2" y="1.9" width="1.5" height="1" fill="#9ae0f8"/><rect x="6.9" y="1.9" width="1.5" height="1" fill="#9ae0f8"/><rect x="9.600000000000001" y="1.9" width="1.5" height="1" fill="#9ae0f8"/><rect x="12.3" y="1.9" width="1.5" height="1" fill="#9ae0f8"/><rect x="6.4" y="2" width="3.4" height="10" rx="0.6" fill="none" stroke="#2838d8" stroke-width="1.2"/></svg>
<div class="t" style="left:156px;top:633px">31</div>
<div class="a" style="left:174px;top:628px;width:33px;height:21px;border-top:1px solid #858585;border-left:1px solid #858585;border-bottom:1px solid #f4f4f4;border-right:1px solid #f4f4f4"></div>
<svg style="left:176.5px;top:630.5px" width="16" height="15"><rect x="0.5" y="0.5" width="14" height="13" fill="#f8fcfc" stroke="#243434" stroke-width="1"/><rect x="1.8" y="1.8" width="11.4" height="1.8" fill="#30c0f4"/><rect x="1.8" y="1.8" width="2" height="10.4" fill="#30c0f4"/><rect x="4.2" y="4.2" width="1.9" height="1.4" fill="#d4dcdc"/><rect x="4.2" y="6.4" width="1.9" height="1.4" fill="#d4dcdc"/><rect x="4.2" y="8.600000000000001" width="1.9" height="1.4" fill="#d4dcdc"/><rect x="4.2" y="10.8" width="1.9" height="1.4" fill="#d4dcdc"/><rect x="6.9" y="4.2" width="1.9" height="1.4" fill="#d4dcdc"/><rect x="6.9" y="6.4" width="1.9" height="1.4" fill="#d4dcdc"/><rect x="6.9" y="8.600000000000001" width="1.9" height="1.4" fill="#d4dcdc"/><rect x="6.9" y="10.8" width="1.9" height="1.4" fill="#d4dcdc"/><rect x="9.600000000000001" y="4.2" width="1.9" height="1.4" fill="#d4dcdc"/><rect x="9.600000000000001" y="6.4" width="1.9" height="1.4" fill="#d4dcdc"/><rect x="9.600000000000001" y="8.600000000000001" width="1.9" height="1.4" fill="#d4dcdc"/><rect x="9.600000000000001" y="10.8" width="1.9" height="1.4" fill="#d4dcdc"/><rect x="12.3" y="4.2" width="1.9" height="1.4" fill="#d4dcdc"/><rect x="12.3" y="6.4" width="1.9" height="1.4" fill="#d4dcdc"/><rect x="12.3" y="8.600000000000001" width="1.9" height="1.4" fill="#d4dcdc"/><rect x="12.3" y="10.8" width="1.9" height="1.4" fill="#d4dcdc"/><rect x="1.6" y="4.2" width="1.5" height="1.2" fill="#9ae0f8"/><rect x="1.6" y="6.4" width="1.5" height="1.2" fill="#9ae0f8"/><rect x="1.6" y="8.600000000000001" width="1.5" height="1.2" fill="#9ae0f8"/><rect x="1.6" y="10.8" width="1.5" height="1.2" fill="#9ae0f8"/><rect x="4.2" y="1.9" width="1.5" height="1" fill="#9ae0f8"/><rect x="6.9" y="1.9" width="1.5" height="1" fill="#9ae0f8"/><rect x="9.600000000000001" y="1.9" width="1.5" height="1" fill="#9ae0f8"/><rect x="12.3" y="1.9" width="1.5" height="1" fill="#9ae0f8"/><rect x="1.7" y="5.6" width="11.6" height="3" rx="0.6" fill="none" stroke="#2838d8" stroke-width="1.2"/></svg>
<div class="t" style="left:194px;top:633px">2</div>
<div class="a" style="left:209px;top:628px;width:42px;height:21px;border-top:1px solid #858585;border-left:1px solid #858585;border-bottom:1px solid #f4f4f4;border-right:1px solid #f4f4f4"></div>
<div class="a" style="left:249px;top:632px;width:3px;height:13px;background:#535353"></div>
<div class="a" style="left:212px;top:631px;width:14px;height:14px;background:#5a6898;border:1px dashed #2850f0;border-radius:2px"></div>
<div class="t" style="left:229px;top:633px">1:1</div>
<div class="a" style="left:252px;top:628px;width:427px;height:21px;border-top:1px solid #858585;border-left:1px solid #858585;border-bottom:1px solid #f4f4f4;border-right:1px solid #f4f4f4"></div>
<svg style="left:255px;top:631px" width="15" height="15"><rect x="1" y="1" width="13" height="13" fill="#90b0f0"/><rect x="0" y="0" width="2.5" height="2.5" fill="#bbb"/><rect x="12" y="0" width="2.5" height="2.5" fill="#bbb"/><rect x="0" y="12" width="2.5" height="2.5" fill="#111"/><rect x="12" y="12" width="2.5" height="2.5" fill="#111"/></svg>
<div class="t" style="left:272px;top:633px;letter-spacing:0.35px">(no name)</div>
<div class="t" style="left:686px;top:633px">Pink</div>
<svg style="left:718px;top:632px" width="12" height="12"><rect x="0" y="0" width="3" height="3" fill="#f06060"/><rect x="4" y="0" width="3" height="3" fill="#f0a050"/><rect x="8" y="0" width="3" height="3" fill="#f8d050"/><rect x="0" y="4" width="3" height="3" fill="#c8f080"/><rect x="4" y="4" width="3" height="3" fill="#40c040"/><rect x="8" y="4" width="3" height="3" fill="#40b0f0"/><rect x="0" y="8" width="3" height="3" fill="#4060c0"/><rect x="4" y="8" width="3" height="3" fill="#e080f0"/><rect x="8" y="8" width="3" height="3" fill="#f070a0"/></svg>
<svg style="left:737px;top:631px" width="15" height="15"><rect x="0.9" y="0.9" width="12.2" height="12.2" rx="1.5" fill="#f2f2f2" stroke="#2e2e2e" stroke-width="0.9"/><rect x="2.2" y="2" width="9.6" height="8.6" fill="#e4e4e4"/><rect x="2.8" y="2.5" width="8.4" height="7.6" fill="#f6f6f6"/><path d="M4.3 8.3V5Q4.3 3.8 5.6 3.8Q6.9 3.8 6.9 5V8.3M4.3 6.3H6.9" stroke="#555" stroke-width="1" fill="none"/></svg>
<div class="t" style="left:754px;top:633px">Empty char</div>
<div class="a" style="left:4px;top:660px;width:14px;height:14px;border-radius:3px;background:linear-gradient(#6a90f8,#2850d0 55%,#4070f0);border:1px solid #1020a0"></div>
<div class="a" style="left:10px;top:663px;width:2px;height:2px;background:#fff"></div><div class="a" style="left:10px;top:666px;width:2px;height:5px;background:#f4f0e0"></div>
<div class="key" style="left:147px;top:681px;width:31px;height:28px"></div>
<div class="kl" style="left:150.5px;top:681px">~</div>
<div class="kl" style="left:150.5px;top:697.5px;font-size:11.5px">`</div>
<div class="key" style="left:183px;top:681px;width:31px;height:28px"></div>
<div class="kl" style="left:186.5px;top:681px">!</div>
<div class="kl" style="left:186.5px;top:697.5px;font-size:11.5px">1</div>
<div class="key" style="left:219px;top:681px;width:31px;height:28px"></div>
<div class="kl" style="left:222.5px;top:681px">@</div>
<div class="kl" style="left:222.5px;top:697.5px;font-size:11.5px">2</div>
<div class="key" style="left:255px;top:681px;width:31px;height:28px"></div>
<div class="kl" style="left:258.5px;top:681px">#</div>
<div class="kl" style="left:258.5px;top:697.5px;font-size:11.5px">3</div>
<div class="key" style="left:291px;top:681px;width:31px;height:28px"></div>
<div class="kl" style="left:294.5px;top:681px">$</div>
<div class="kl" style="left:294.5px;top:697.5px;font-size:11.5px">4</div>
<div class="key" style="left:327px;top:681px;width:31px;height:28px"></div>
<div class="kl" style="left:330.5px;top:681px">%</div>
<div class="kl" style="left:330.5px;top:697.5px;font-size:11.5px">5</div>
<div class="key" style="left:363px;top:681px;width:31px;height:28px"></div>
<div class="kl" style="left:366.5px;top:681px">^</div>
<div class="kl" style="left:366.5px;top:697.5px;font-size:11.5px">6</div>
<div class="key" style="left:399px;top:681px;width:31px;height:28px"></div>
<div class="kl" style="left:402.5px;top:681px">&</div>
<div class="kl" style="left:402.5px;top:697.5px;font-size:11.5px">7</div>
<div class="key" style="left:435px;top:681px;width:31px;height:28px"></div>
<div class="kl" style="left:438.5px;top:681px">*</div>
<div class="kl" style="left:438.5px;top:697.5px;font-size:11.5px">8</div>
<div class="key" style="left:471px;top:681px;width:31px;height:28px"></div>
<div class="kl" style="left:474.5px;top:681px">(</div>
<div class="kl" style="left:474.5px;top:697.5px;font-size:11.5px">9</div>
<div class="key" style="left:507px;top:681px;width:31px;height:28px"></div>
<div class="kl" style="left:510.5px;top:681px">)</div>
<div class="kl" style="left:510.5px;top:697.5px;font-size:11.5px">0</div>
<div class="key" style="left:543px;top:681px;width:31px;height:28px"></div>
<div class="kl" style="left:546.5px;top:681px">_</div>
<div class="kl" style="left:546.5px;top:697.5px;font-size:11.5px">-</div>
<div class="key" style="left:579px;top:681px;width:31px;height:28px"></div>
<div class="kl" style="left:582.5px;top:681px">+</div>
<div class="kl" style="left:582.5px;top:697.5px;font-size:11.5px">=</div>
<div class="key" style="left:615px;top:681px;width:31px;height:28px"></div>
<div class="kl" style="left:616.5px;top:682px;font-size:10px;letter-spacing:-0.2px">Ins</div>
<div class="key" style="left:651px;top:681px;width:31px;height:28px"></div>
<div class="kl" style="left:652.5px;top:682px;font-size:10px;letter-spacing:-0.2px">Del</div>
<div class="key" style="left:205px;top:711px;width:30px;height:29px"></div>
<div class="kl" style="left:208px;top:712px">Q</div>
<div class="key" style="left:241px;top:711px;width:30px;height:29px"></div>
<div class="kl" style="left:244px;top:712px">W</div>
<div class="key" style="left:277px;top:711px;width:30px;height:29px"></div>
<div class="kl" style="left:280px;top:712px">E</div>
<div class="key" style="left:313px;top:711px;width:30px;height:29px"></div>
<div class="kl" style="left:316px;top:712px">R</div>
<div class="key" style="left:349px;top:711px;width:30px;height:29px"></div>
<div class="kl" style="left:352px;top:712px">T</div>
<div class="key" style="left:385px;top:711px;width:30px;height:29px"></div>
<div class="kl" style="left:388px;top:712px">Y</div>
<div class="key" style="left:421px;top:711px;width:30px;height:29px"></div>
<div class="kl" style="left:424px;top:712px">U</div>
<div class="key" style="left:457px;top:711px;width:30px;height:29px"></div>
<div class="kl" style="left:460px;top:712px">I</div>
<div class="key" style="left:493px;top:711px;width:30px;height:29px"></div>
<div class="kl" style="left:496px;top:712px">O</div>
<div class="key" style="left:529px;top:711px;width:30px;height:29px"></div>
<div class="kl" style="left:532px;top:712px">P</div>
<div class="key" style="left:566px;top:711px;width:30px;height:29px"></div>
<div class="kl" style="left:569px;top:712px">{</div>
<div class="kl" style="left:569.5px;top:727.5px;font-size:11.5px">[</div>
<div class="key" style="left:601px;top:711px;width:30px;height:29px"></div>
<div class="kl" style="left:604px;top:712px">}</div>
<div class="kl" style="left:604.5px;top:727.5px;font-size:11.5px">]</div>
<div class="key" style="left:215px;top:743px;width:31px;height:28px"></div>
<div class="kl" style="left:218px;top:744px">A</div>
<div class="key" style="left:250px;top:743px;width:31px;height:28px"></div>
<div class="kl" style="left:253px;top:744px">S</div>
<div class="key" style="left:286px;top:743px;width:31px;height:28px"></div>
<div class="kl" style="left:289px;top:744px">D</div>
<div class="key" style="left:322px;top:743px;width:31px;height:28px"></div>
<div class="kl" style="left:325px;top:744px">F</div>
<div class="key" style="left:358px;top:743px;width:31px;height:28px"></div>
<div class="kl" style="left:361px;top:744px">G</div>
<div class="key" style="left:394px;top:743px;width:31px;height:28px"></div>
<div class="kl" style="left:397px;top:744px">H</div>
<div class="key" style="left:430px;top:743px;width:31px;height:28px"></div>
<div class="kl" style="left:433px;top:744px">J</div>
<div class="key" style="left:465.5px;top:743px;width:31px;height:28px"></div>
<div class="kl" style="left:468.5px;top:744px">K</div>
<div class="key" style="left:502px;top:743px;width:31px;height:28px"></div>
<div class="kl" style="left:505px;top:744px">L</div>
<div class="key" style="left:538px;top:743px;width:31px;height:28px"></div>
<div class="kl" style="left:541px;top:744px">:</div>
<div class="kl" style="left:541.5px;top:759.5px;font-size:11.5px">;</div>
<div class="key" style="left:573.5px;top:743px;width:31px;height:28px"></div>
<div class="kl" style="left:576.5px;top:744px">"</div>
<div class="kl" style="left:577.0px;top:759.5px;font-size:11.5px">'</div>
<div class="key" style="left:608px;top:743px;width:31px;height:28px"></div>
<div class="kl" style="left:611px;top:744px">|</div>
<div class="kl" style="left:611.5px;top:759.5px;font-size:11.5px">\</div>
<div class="key" style="left:228.5px;top:773px;width:29.5px;height:28px"></div>
<div class="kl" style="left:231.5px;top:774px">Z</div>
<div class="key" style="left:264.5px;top:773px;width:29.5px;height:28px"></div>
<div class="kl" style="left:267.5px;top:774px">X</div>
<div class="key" style="left:301px;top:773px;width:29.5px;height:28px"></div>
<div class="kl" style="left:304px;top:774px">C</div>
<div class="key" style="left:337px;top:773px;width:29.5px;height:28px"></div>
<div class="kl" style="left:340px;top:774px">V</div>
<div class="key" style="left:372px;top:773px;width:29.5px;height:28px"></div>
<div class="kl" style="left:375px;top:774px">B</div>
<div class="key" style="left:409px;top:773px;width:29.5px;height:28px"></div>
<div class="kl" style="left:412px;top:774px">N</div>
<div class="key" style="left:445px;top:773px;width:29.5px;height:28px"></div>
<div class="kl" style="left:448px;top:774px">M</div>
<div class="key" style="left:480px;top:773px;width:29.5px;height:28px"></div>
<div class="kl" style="left:483px;top:774px"><</div>
<div class="kl" style="left:483.5px;top:789.5px;font-size:11.5px">,</div>
<div class="key" style="left:516px;top:773px;width:29.5px;height:28px"></div>
<div class="kl" style="left:519px;top:774px">></div>
<div class="kl" style="left:519.5px;top:789.5px;font-size:11.5px">.</div>
<div class="key" style="left:552.5px;top:773px;width:29.5px;height:28px"></div>
<div class="kl" style="left:555.5px;top:774px">?</div>
<div class="kl" style="left:556.0px;top:789.5px;font-size:11.5px">/</div>
<svg style="left:0;top:0" width="1098" height="817"><path d="M166 693h2v2h-2zM164 695h4v2h-4zM162 697h14v2h-14zM162 699h14v2h-14zM164 701h4v2h-4zM166 703h2v2h-2zM202 691h4v2h-4zM202 693h4v2h-4zM200 695h6v2h-6zM202 697h4v2h-4zM202 699h4v2h-4zM202 701h4v2h-4zM198 703h12v2h-12zM236 691h8v2h-8zM234 693h4v2h-4zM242 693h4v2h-4zM242 695h4v2h-4zM240 697h4v2h-4zM236 699h4v2h-4zM234 701h4v2h-4zM234 703h12v2h-12zM272 691h8v2h-8zM270 693h4v2h-4zM278 693h4v2h-4zM278 695h4v2h-4zM274 697h6v2h-6zM278 699h4v2h-4zM270 701h4v2h-4zM278 701h4v2h-4zM272 703h8v2h-8zM314 691h4v2h-4zM312 693h6v2h-6zM310 695h8v2h-8zM306 697h4v2h-4zM314 697h4v2h-4zM306 699h14v2h-14zM314 701h4v2h-4zM314 703h4v2h-4zM342 691h12v2h-12zM342 693h4v2h-4zM342 695h10v2h-10zM350 697h4v2h-4zM350 699h4v2h-4zM342 701h4v2h-4zM350 701h4v2h-4zM344 703h8v2h-8zM380 691h8v2h-8zM378 693h4v2h-4zM386 693h4v2h-4zM378 695h4v2h-4zM378 697h10v2h-10zM378 699h4v2h-4zM386 699h4v2h-4zM378 701h4v2h-4zM386 701h4v2h-4zM380 703h8v2h-8zM414 691h12v2h-12zM414 693h4v2h-4zM422 693h4v2h-4zM420 695h4v2h-4zM418 697h4v2h-4zM418 699h4v2h-4zM418 701h4v2h-4zM418 703h4v2h-4zM452 691h8v2h-8zM450 693h4v2h-4zM458 693h4v2h-4zM450 695h4v2h-4zM458 695h4v2h-4zM452 697h8v2h-8zM450 699h4v2h-4zM458 699h4v2h-4zM450 701h4v2h-4zM458 701h4v2h-4zM452 703h8v2h-8zM488 691h8v2h-8zM486 693h4v2h-4zM494 693h4v2h-4zM486 695h4v2h-4zM494 695h4v2h-4zM488 697h10v2h-10zM494 699h4v2h-4zM486 701h4v2h-4zM494 701h4v2h-4zM488 703h8v2h-8zM524 691h8v2h-8zM522 693h4v2h-4zM530 693h4v2h-4zM522 695h4v2h-4zM528 695h6v2h-6zM522 697h6v2h-6zM530 697h4v2h-4zM522 699h4v2h-4zM530 699h4v2h-4zM522 701h4v2h-4zM530 701h4v2h-4zM524 703h8v2h-8zM562 693h4v2h-4zM562 695h4v2h-4zM558 697h12v2h-12zM562 699h4v2h-4zM562 701h4v2h-4zM594 697h12v2h-12zM636 691h4v2h-4zM634 693h2v2h-2zM640 693h2v2h-2zM632 695h4v2h-4zM630 697h10v2h-10zM632 699h4v2h-4zM630 701h4v2h-4zM640 701h2v2h-2zM628 703h12v2h-12zM670 693h4v2h-4zM668 695h8v2h-8zM666 697h12v2h-12zM670 699h4v2h-4zM670 701h4v2h-4zM670 703h4v2h-4zM670 705h4v2h-4zM221 722h8v2h-8zM219 724h4v2h-4zM227 724h4v2h-4zM219 726h4v2h-4zM227 726h4v2h-4zM219 728h4v2h-4zM227 728h4v2h-4zM219 730h4v2h-4zM227 730h4v2h-4zM221 732h8v2h-8zM225 734h6v2h-6zM255 722h4v2h-4zM265 722h4v2h-4zM255 724h4v2h-4zM265 724h4v2h-4zM255 726h4v2h-4zM265 726h4v2h-4zM255 728h4v2h-4zM261 728h2v2h-2zM265 728h4v2h-4zM255 730h14v2h-14zM255 732h6v2h-6zM263 732h6v2h-6zM255 734h4v2h-4zM265 734h4v2h-4zM292 722h12v2h-12zM292 724h4v2h-4zM292 726h4v2h-4zM292 728h8v2h-8zM292 730h4v2h-4zM292 732h4v2h-4zM292 734h12v2h-12zM328 722h10v2h-10zM328 724h4v2h-4zM336 724h4v2h-4zM328 726h4v2h-4zM336 726h4v2h-4zM328 728h10v2h-10zM328 730h8v2h-8zM328 732h4v2h-4zM334 732h4v2h-4zM328 734h4v2h-4zM336 734h4v2h-4zM364 722h12v2h-12zM368 724h4v2h-4zM368 726h4v2h-4zM368 728h4v2h-4zM368 730h4v2h-4zM368 732h4v2h-4zM368 734h4v2h-4zM400 722h4v2h-4zM408 722h4v2h-4zM400 724h4v2h-4zM408 724h4v2h-4zM400 726h4v2h-4zM408 726h4v2h-4zM402 728h8v2h-8zM404 730h4v2h-4zM404 732h4v2h-4zM404 734h4v2h-4zM436 722h4v2h-4zM444 722h4v2h-4zM436 724h4v2h-4zM444 724h4v2h-4zM436 726h4v2h-4zM444 726h4v2h-4zM436 728h4v2h-4zM444 728h4v2h-4zM436 730h4v2h-4zM444 730h4v2h-4zM436 732h4v2h-4zM444 732h4v2h-4zM438 734h8v2h-8zM475 722h8v2h-8zM477 724h4v2h-4zM477 726h4v2h-4zM477 728h4v2h-4zM477 730h4v2h-4zM477 732h4v2h-4zM475 734h8v2h-8zM511 722h8v2h-8zM509 724h4v2h-4zM517 724h4v2h-4zM509 726h4v2h-4zM517 726h4v2h-4zM509 728h4v2h-4zM517 728h4v2h-4zM509 730h4v2h-4zM517 730h4v2h-4zM509 732h4v2h-4zM517 732h4v2h-4zM511 734h8v2h-8zM545 722h10v2h-10zM545 724h4v2h-4zM553 724h4v2h-4zM545 726h4v2h-4zM553 726h4v2h-4zM545 728h10v2h-10zM545 730h4v2h-4zM545 732h4v2h-4zM545 734h4v2h-4zM584 722h8v2h-8zM582 724h4v2h-4zM590 724h4v2h-4zM582 726h4v2h-4zM588 726h6v2h-6zM582 728h4v2h-4zM588 728h6v2h-6zM582 730h4v2h-4zM582 732h4v2h-4zM592 732h2v2h-2zM584 734h8v2h-8zM618 724h4v2h-4zM626 724h4v2h-4zM620 726h8v2h-8zM616 728h16v2h-16zM620 730h8v2h-8zM618 732h4v2h-4zM626 732h4v2h-4zM234 753h4v2h-4zM232 755h8v2h-8zM230 757h4v2h-4zM238 757h4v2h-4zM230 759h12v2h-12zM230 761h4v2h-4zM238 761h4v2h-4zM230 763h4v2h-4zM238 763h4v2h-4zM230 765h4v2h-4zM238 765h4v2h-4zM267 753h8v2h-8zM265 755h4v2h-4zM273 755h4v2h-4zM265 757h4v2h-4zM267 759h8v2h-8zM273 761h4v2h-4zM265 763h4v2h-4zM273 763h4v2h-4zM267 765h8v2h-8zM301 753h8v2h-8zM301 755h4v2h-4zM307 755h4v2h-4zM301 757h4v2h-4zM309 757h4v2h-4zM301 759h4v2h-4zM309 759h4v2h-4zM301 761h4v2h-4zM309 761h4v2h-4zM301 763h4v2h-4zM307 763h4v2h-4zM301 765h8v2h-8zM337 753h12v2h-12zM337 755h4v2h-4zM337 757h4v2h-4zM337 759h8v2h-8zM337 761h4v2h-4zM337 763h4v2h-4zM337 765h4v2h-4zM375 753h8v2h-8zM373 755h4v2h-4zM381 755h4v2h-4zM373 757h4v2h-4zM373 759h4v2h-4zM379 759h6v2h-6zM373 761h4v2h-4zM381 761h4v2h-4zM373 763h4v2h-4zM381 763h4v2h-4zM375 765h8v2h-8zM409 753h4v2h-4zM417 753h4v2h-4zM409 755h4v2h-4zM417 755h4v2h-4zM409 757h4v2h-4zM417 757h4v2h-4zM409 759h12v2h-12zM409 761h4v2h-4zM417 761h4v2h-4zM409 763h4v2h-4zM417 763h4v2h-4zM409 765h4v2h-4zM417 765h4v2h-4zM449 753h8v2h-8zM451 755h4v2h-4zM451 757h4v2h-4zM451 759h4v2h-4zM451 761h4v2h-4zM445 763h4v2h-4zM451 763h4v2h-4zM447 765h6v2h-6zM481 753h4v2h-4zM489 753h4v2h-4zM481 755h4v2h-4zM487 755h4v2h-4zM481 757h8v2h-8zM481 759h6v2h-6zM481 761h8v2h-8zM481 763h4v2h-4zM487 763h4v2h-4zM481 765h4v2h-4zM489 765h4v2h-4zM517 753h4v2h-4zM517 755h4v2h-4zM517 757h4v2h-4zM517 759h4v2h-4zM517 761h4v2h-4zM517 763h4v2h-4zM517 765h12v2h-12zM557 757h4v2h-4zM557 763h4v2h-4zM593 757h4v2h-4zM593 763h4v2h-4zM593 765h4v2h-4zM591 767h4v2h-4zM623 757h12v2h-12zM623 761h12v2h-12zM243 783h12v2h-12zM251 785h4v2h-4zM249 787h4v2h-4zM247 789h4v2h-4zM245 791h4v2h-4zM243 793h4v2h-4zM243 795h12v2h-12zM279 783h4v2h-4zM287 783h4v2h-4zM279 785h4v2h-4zM287 785h4v2h-4zM281 787h8v2h-8zM283 789h4v2h-4zM281 791h8v2h-8zM279 793h4v2h-4zM287 793h4v2h-4zM279 795h4v2h-4zM287 795h4v2h-4zM318 783h8v2h-8zM316 785h4v2h-4zM324 785h4v2h-4zM316 787h4v2h-4zM316 789h4v2h-4zM316 791h4v2h-4zM316 793h4v2h-4zM324 793h4v2h-4zM318 795h8v2h-8zM352 783h4v2h-4zM360 783h4v2h-4zM352 785h4v2h-4zM360 785h4v2h-4zM352 787h4v2h-4zM360 787h4v2h-4zM352 789h4v2h-4zM360 789h4v2h-4zM352 791h4v2h-4zM360 791h4v2h-4zM354 793h8v2h-8zM356 795h4v2h-4zM387 783h10v2h-10zM387 785h4v2h-4zM395 785h4v2h-4zM387 787h4v2h-4zM395 787h4v2h-4zM387 789h10v2h-10zM387 791h4v2h-4zM395 791h4v2h-4zM387 793h4v2h-4zM395 793h4v2h-4zM387 795h10v2h-10zM424 783h4v2h-4zM432 783h4v2h-4zM424 785h6v2h-6zM432 785h4v2h-4zM424 787h12v2h-12zM424 789h12v2h-12zM424 791h4v2h-4zM430 791h6v2h-6zM424 793h4v2h-4zM432 793h4v2h-4zM424 795h4v2h-4zM432 795h4v2h-4zM460 783h4v2h-4zM470 783h4v2h-4zM460 785h6v2h-6zM468 785h6v2h-6zM460 787h14v2h-14zM460 789h4v2h-4zM466 789h2v2h-2zM470 789h4v2h-4zM460 791h4v2h-4zM470 791h4v2h-4zM460 793h4v2h-4zM470 793h4v2h-4zM460 795h4v2h-4zM470 795h4v2h-4zM499 793h4v2h-4zM499 795h4v2h-4zM497 797h4v2h-4zM535 793h4v2h-4zM535 795h4v2h-4zM577 785h4v2h-4zM575 787h4v2h-4zM573 789h4v2h-4zM571 791h4v2h-4zM569 793h4v2h-4zM567 795h4v2h-4z" fill="#0010f0"/></svg>
</body></html>
